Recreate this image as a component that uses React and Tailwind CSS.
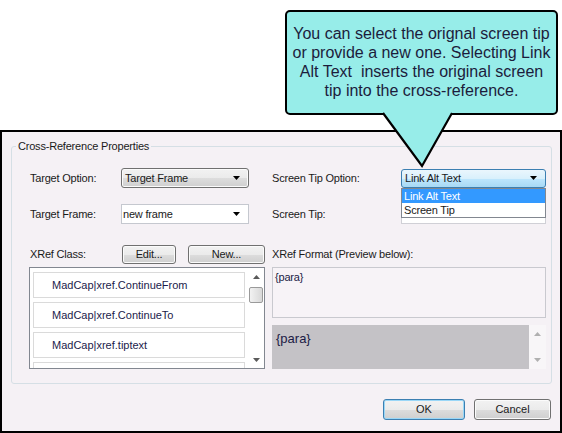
import React from 'react';

const DownArrow = ({ color = '#000' }) => (
  <svg width="7" height="4" viewBox="0 0 7 4">
    <path d="M0 0h7L3.5 4z" fill={color} />
  </svg>
);

const UpArrow = ({ color = '#000' }) => (
  <svg width="7" height="4" viewBox="0 0 7 4">
    <path d="M0 4h7L3.5 0z" fill={color} />
  </svg>
);

const classes = ['MadCap|xref.ContinueFrom', 'MadCap|xref.ContinueTo', 'MadCap|xref.tiptext', ''];

const btn =
  'flex items-center justify-center rounded-[3px] border border-[#707070] bg-[linear-gradient(#f2f2f2_0%,#ebebeb_50%,#dddddd_51%,#cfcfcf_100%)] shadow-[inset_0_0_0_1px_#fbfbfb] text-[11px] text-[#1a1a1a]';

export default function App() {
  return (
    <div className="relative h-[433px] w-[562px] overflow-hidden bg-white font-['Liberation_Sans',Arial,sans-serif]">
      {/* Dialog */}
      <div className="mt-[130px] flex h-[303px] flex-col border-2 border-black bg-[#f5f1f5]">
        <fieldset className="mt-[8px] ml-[9px] mr-[8px] h-[244px] rounded-[3px] border border-[#d5dfe5] px-0 pt-[16px] pb-0">
          <legend className="ml-[4px] px-[2px] text-[11px] leading-[12px] tracking-[-0.2px] text-[#1a1a1a]">
            Cross-Reference Properties
          </legend>

          <div className="flex flex-col pl-[18px] text-[11px] tracking-[-0.2px] text-[#1a1a1a]">
            {/* Row 1 */}
            <div className="grid h-[20px] grid-cols-[235px_274px] gap-x-[7px]">
              <div className="flex items-center">
                <span className="w-[91px]">Target Option:</span>
                <div className="flex h-[20px] w-[128px] items-center justify-between rounded-[3px] border border-[#707070] bg-[linear-gradient(#f2f2f2_0%,#ebebeb_50%,#dddddd_51%,#cfcfcf_100%)] pl-[3px] pr-[8px] shadow-[inset_0_0_0_1px_#fbfbfb]">
                  <span>Target Frame</span>
                  <DownArrow />
                </div>
              </div>
              <div className="flex items-center">
                <span className="w-[129px]">Screen Tip Option:</span>
                <div className="relative h-[19px] w-[145px]">
                  <div className="flex h-full items-center justify-between rounded-[3px] border border-[#3c7fb1] bg-[linear-gradient(#eaf6fd_0%,#d9f0fc_50%,#bee6fd_51%,#a7d9f5_100%)] pl-[3px] pr-[8px]">
                    <span>Link Alt Text</span>
                    <DownArrow />
                  </div>
                  <div className="absolute left-0 top-full z-10 w-full border border-[#828790] bg-white">
                    <div className="h-[14px] bg-[#3399ff] pl-[2px] leading-[14px] text-white">Link Alt Text</div>
                    <div className="h-[14px] pl-[2px] leading-[14px]">Screen Tip</div>
                  </div>
                </div>
              </div>
            </div>

            {/* Row 2 */}
            <div className="mt-[16px] grid h-[20px] grid-cols-[235px_274px] gap-x-[7px]">
              <div className="flex items-center">
                <span className="w-[91px]">Target Frame:</span>
                <div className="flex h-[20px] w-[128px] items-center justify-between border border-[#c5c8cf] bg-white pl-[1px] pr-[8px]">
                  <span>new frame</span>
                  <DownArrow />
                </div>
              </div>
              <div className="flex items-center">
                <span className="w-[129px]">Screen Tip:</span>
                <div className="h-[19px] w-[145px] border border-[#d0d0d6] bg-white" />
              </div>
            </div>

            {/* Row 3 */}
            <div className="mt-[21px] grid h-[19px] grid-cols-[235px_274px] gap-x-[7px]">
              <div className="flex items-center">
                <span className="w-[92px]">XRef Class:</span>
                <button className={`${btn} h-[19px] w-[54px]`}>Edit...</button>
                <button className={`${btn} ml-[12px] h-[19px] w-[77px]`}>New...</button>
              </div>
              <div className="flex items-center">
                <span>XRef Format (Preview below):</span>
              </div>
            </div>

            {/* Row 4 */}
            <div className="mt-[3px] grid h-[102px] grid-cols-[235px_274px] gap-x-[7px]">
              <div className="-ml-px flex h-[102px] w-[236px] border border-[#828790] bg-white">
                <div className="flex flex-1 flex-col gap-[4px] overflow-hidden pl-[3px] pt-[4px]">
                  {classes.map((c, i) => (
                    <div
                      key={i}
                      className="flex h-[26px] w-[212px] shrink-0 items-center border border-[#dadada] pl-[18px] tracking-normal text-[#1b1b4b]"
                    >
                      {c}
                    </div>
                  ))}
                </div>
                <div className="ml-[3px] flex w-[16px] flex-col items-center">
                  <div className="flex h-[17px] items-center justify-center">
                    <UpArrow color="#5a5a5a" />
                  </div>
                  <div className="mt-[2px] h-[16px] w-[14px] rounded-[2px] border border-[#9a9a9a] bg-[linear-gradient(90deg,#f2f2f2,#d8d8d8)]" />
                  <div className="flex-1" />
                  <div className="flex h-[17px] items-center justify-center">
                    <DownArrow color="#5a5a5a" />
                  </div>
                </div>
              </div>

              <div className="flex flex-col">
                <div className="h-[51px] border border-[#c9c9cf] bg-[#f7f3f7] pl-[2px] pt-[3px] leading-[13px] text-[#1b1b45]">
                  {'{para}'}
                </div>
                <div className="mt-[7px] flex h-[44px]">
                  <div className="flex-1 bg-[#c4c2c6] pl-[4px] pt-[6px] text-[13px] leading-[15px] tracking-normal text-[#1b1b45]">
                    {'{para}'}
                  </div>
                  <div className="flex w-[17px] flex-col items-center justify-between bg-[#f8f6f8] py-[7px]">
                    <UpArrow color="#b0b0b0" />
                    <DownArrow color="#b0b0b0" />
                  </div>
                </div>
              </div>
            </div>
          </div>
        </fieldset>

        {/* OK / Cancel */}
        <div className="mr-[9px] mt-[15px] flex justify-end gap-[9px]">
          <button className="flex h-[21px] w-[82px] items-center justify-center rounded-[3px] border border-[#3c7fb1] bg-[linear-gradient(#f2f2f2_0%,#ebebeb_50%,#dddddd_51%,#cfcfcf_100%)] text-[11px] text-[#1a1a1a] shadow-[inset_0_0_0_1px_#9ad7f7]">
            OK
          </button>
          <button className={`${btn} h-[21px] w-[77px]`}>Cancel</button>
        </div>
      </div>

      {/* Callout */}
      <div className="absolute left-[285px] top-[10px] h-[105px] w-[273px] rounded-[5px] border-2 border-black bg-[#97ede9] pt-[12px] text-center text-[16px] leading-[19px] text-[#1c1c3c]">
        You can select the orignal screen tip
        <br />
        or provide a new one. Selecting Link
        <br />
        {'Alt Text\u00a0 inserts the original screen'}
        <br />
        tip into the cross-reference.
      </div>
      <svg className="absolute left-[378px] top-[111px]" width="80" height="58" viewBox="0 0 80 58">
        <polygon points="5,0 74,0 74,2 44,55 5,2" fill="#97ede9" />
        <polyline points="5,2 44,55 74,2" fill="none" stroke="#000" strokeWidth="2.2" strokeLinejoin="miter" />
      </svg>
    </div>
  );
}
